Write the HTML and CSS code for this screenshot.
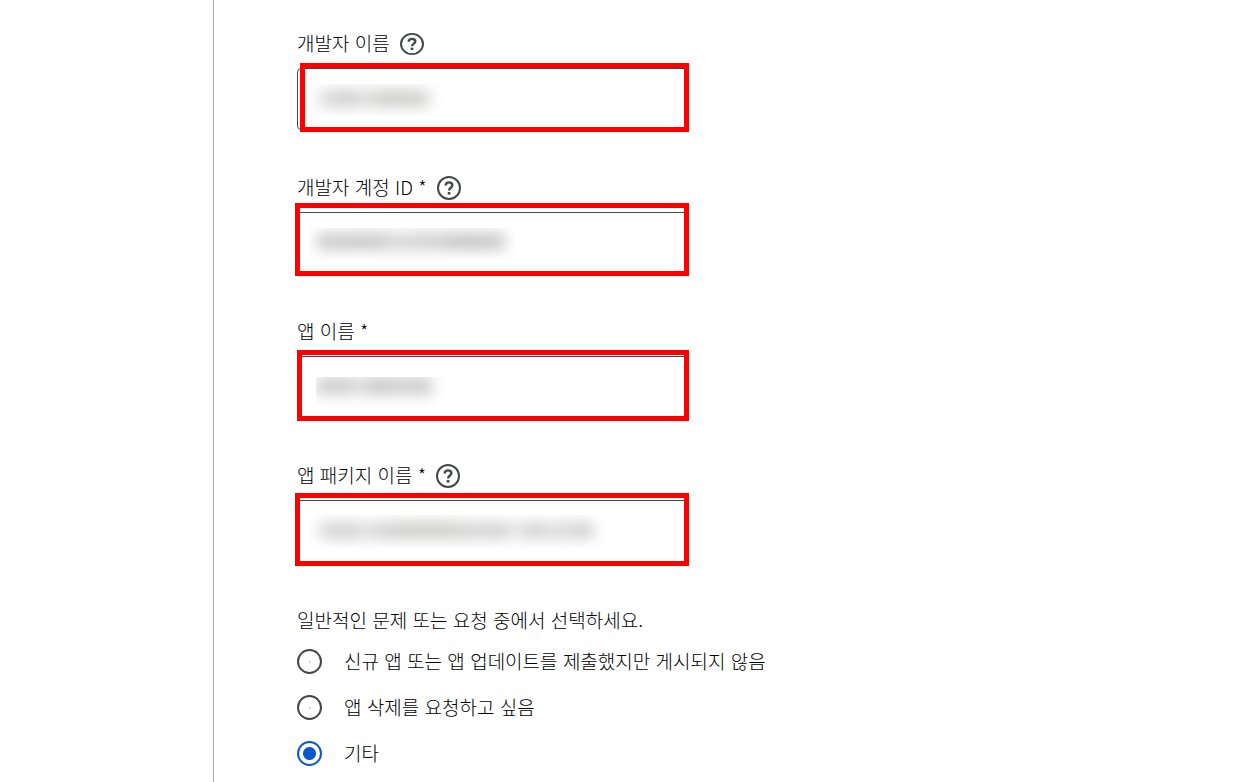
FILE: index.html
```html
<!DOCTYPE html>
<html lang="ko">
<head>
<meta charset="utf-8">
<title>개발자 이름</title>
<link rel="stylesheet" href="styles.css">
</head>
<body>
<div class="page">
  <main class="content">
    <form class="form">
      <div class="field">
        <div class="label-row">
          <label for="developer">개발자 이름</label>
          <button class="help help-flat" type="button"><svg viewBox="0 0 24 24" preserveAspectRatio="none"><circle cx="12" cy="12" r="11"/><path class="hook" d="M8.7 9.6C8.7 7.6 10.1 6.4 12 6.4C13.9 6.4 15.3 7.6 15.3 9.3C15.3 11.6 12.1 11.9 12.1 14.4"/><path class="dot" d="M10.7 16h2.7v2.6h-2.7z"/></svg></button>
        </div>
        <div class="control">
          <input class="input" id="developer" type="text">
          <span class="redaction redaction-a"><i></i></span>
          <span class="mark mark-a"></span>
        </div>
      </div>
      <div class="field">
        <div class="label-row">
          <label for="account">개발자 계정 ID *</label>
          <button class="help" type="button"><svg viewBox="0 0 24 24"><circle cx="12" cy="12" r="11"/><path class="hook" d="M8.7 9.6C8.7 7.6 10.1 6.4 12 6.4C13.9 6.4 15.3 7.6 15.3 9.3C15.3 11.6 12.1 11.9 12.1 14.4"/><path class="dot" d="M10.7 16h2.7v2.6h-2.7z"/></svg></button>
        </div>
        <div class="control">
          <input class="input" id="account" type="text" required>
          <span class="redaction redaction-b"><i></i></span>
          <span class="mark mark-b"></span>
        </div>
      </div>
      <div class="field">
        <div class="label-row">
          <label for="app">앱 이름 *</label>
        </div>
        <div class="control">
          <input class="input" id="app" type="text" required>
          <span class="redaction redaction-c"><i></i></span>
          <span class="mark mark-c"></span>
        </div>
      </div>
      <div class="field">
        <div class="label-row">
          <label for="package">앱 패키지 이름 *</label>
          <button class="help" type="button"><svg viewBox="0 0 24 24"><circle cx="12" cy="12" r="11"/><path class="hook" d="M8.7 9.6C8.7 7.6 10.1 6.4 12 6.4C13.9 6.4 15.3 7.6 15.3 9.3C15.3 11.6 12.1 11.9 12.1 14.4"/><path class="dot" d="M10.7 16h2.7v2.6h-2.7z"/></svg></button>
        </div>
        <div class="control">
          <input class="input" id="package" type="text" required>
          <span class="redaction redaction-d"><i></i></span>
          <span class="mark mark-d"></span>
        </div>
      </div>
      <fieldset class="choices">
        <legend>일반적인 문제 또는 요청 중에서 선택하세요.</legend>
        <label class="choice"><input type="radio" name="issue"><span>신규 앱 또는 앱 업데이트를 제출했지만 게시되지 않음</span></label>
        <label class="choice"><input type="radio" name="issue"><span>앱 삭제를 요청하고 싶음</span></label>
        <label class="choice"><input type="radio" name="issue" checked><span>기타</span></label>
      </fieldset>
    </form>
  </main>
</div>
</body>
</html>
```
FILE: styles.css
```css
* { box-sizing: border-box; }

body {
  margin: 0;
  background: #fff;
  color: #000;
  font: 300 19px/28px "Noto Sans CJK KR", sans-serif;
}

.page {
  display: flex;
  min-height: 100vh;
  padding-left: 213px;
}

.content {
  flex: 1;
  padding: 29px 40px 14px 83px;
  border-left: 1px solid #aaa;
}

.form {
  display: flex;
  flex-direction: column;
  gap: 43px;
}

.field {
  display: flex;
  flex-direction: column;
  gap: 11px;
  max-width: 391px;
}

.label-row {
  display: flex;
  align-items: center;
  gap: 10px;
  height: 28px;
}

.help {
  display: flex;
  padding: 2px 0 0;
  border: 0;
  background: none;
}

.help svg {
  width: 24px;
  height: 24px;
  fill: none;
  stroke: #444746;
  stroke-width: 2;
}

.help-flat svg { height: 22px; }
.help .hook { stroke-width: 2.4; }
.help .dot { fill: #444746; stroke: none; }

.control { position: relative; }

.input {
  display: block;
  width: 100%;
  height: 62px;
  padding: 0 18px;
  border: 1px solid #444746;
  border-radius: 4px;
  background: #fff;
  font: inherit;
}

/* Red outlines over the fields */
.mark {
  position: absolute;
  right: -1px;
  border: 5px solid #f00;
  pointer-events: none;
}

.mark-a { left: 3px; top: -5px; bottom: -2px; }
.mark-b { left: -2px; top: -9px; bottom: -2px; }
.mark-c { left: 0; top: -6px; bottom: -3px; }
.mark-d { left: -2px; top: -7px; bottom: -4px; }

/* Blurred-out field values */
.redaction {
  position: absolute;
  overflow: hidden;
  pointer-events: none;
}

.redaction i {
  position: absolute;
  filter: blur(7px);
}

.redaction-a { left: 14px; top: 16px; width: 132px; height: 31px; }
.redaction-a i {
  left: 6px; top: 6px; width: 112px; height: 17px;
  background: linear-gradient(90deg, #e4e4e4, #ccc 25%, #dcdcdc 42%, #ccccc8 65%, #d2d2d2);
}

.redaction-b { left: 12px; top: 16px; width: 206px; height: 32px; }
.redaction-b i {
  left: 8px; top: 5px; width: 188px; height: 17px;
  background: linear-gradient(90deg, #ccc, #c8c8c8 30%, #d8d8d8 42%, #d0d0d0 60%, #c4c4c4 80%, #ccc);
}

.redaction-c { left: 19px; top: 21px; width: 132px; height: 31px; }
.redaction-c i {
  left: 0; top: 0; width: 116px; height: 18px;
  background: linear-gradient(90deg, #d0d0d0, #ccc 25%, #e0e0e0 38%, #c8c8ca 50%, #d0d0d0 70%, #ccc);
}

.redaction-d { left: 12px; top: 15px; width: 298px; height: 33px; }
.redaction-d i {
  left: 10px; top: 7px; width: 274px; height: 17px;
  background: linear-gradient(90deg, #d8d8d8, #d0d0d0 12%, #e2e2e2 16%, #d0d0d0 25%, #ccccca 42%, #d6d6d6 58%, #d0d0d0 66%, #eaeaea 72%, #cecece 78%, #dedede 84%, #cecece);
}

.choices {
  display: flex;
  flex-direction: column;
  gap: 18px;
  min-width: 0;
  margin: 1px 0 0;
  padding: 0;
  border: 0;
}

.choices legend {
  padding: 0;
  margin-bottom: 13px;
}

.choice {
  display: flex;
  align-items: center;
  gap: 22px;
}

.choice input {
  appearance: none;
  flex: none;
  width: 25px;
  height: 25px;
  margin: 0;
  border: 2px solid #444746;
  border-radius: 50%;
  background: radial-gradient(circle, #ccc 0 1px, transparent 1px);
}

.choice input:checked {
  border-color: #0b57d0;
  background: radial-gradient(circle, #0b57d0 0 6px, transparent 7px);
}
```
